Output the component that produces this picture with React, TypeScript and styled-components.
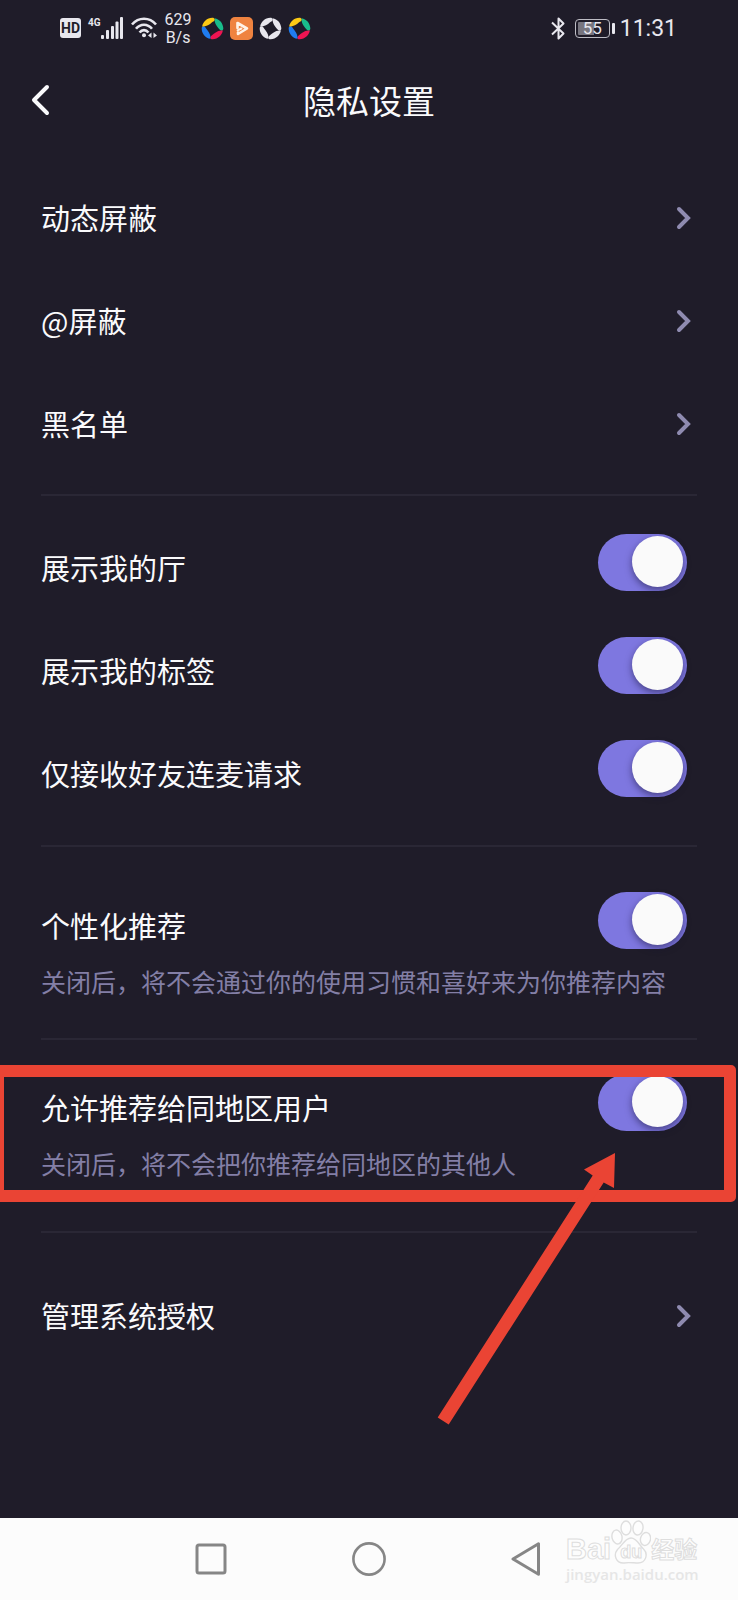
import React, { useId, useState } from "react";
import styled, { createGlobalStyle } from "styled-components";

const GlobalStyle = createGlobalStyle`
  * { box-sizing: border-box; }
  html, body { margin: 0; background: #1f1c29; }
  body { font-family: "Noto Sans CJK SC", "Noto Sans", sans-serif; }
  button { border: 0; padding: 0; background: none; color: inherit; font: inherit; cursor: pointer; }
`;

const Screen = styled.div`
  display: flex;
  flex-direction: column;
  min-height: 100vh;
  color: #fafafc;
  background: #1f1c29;
  overflow-x: hidden;
`;

const StatusBar = styled.div`
  display: flex;
  align-items: center;
  justify-content: space-between;
  height: 56px;
  padding: 0 61px 0 60px;
  color: #e8e7ee;
  font-family: Roboto, sans-serif;
`;

const StatusGroup = styled.div<{ $gap: number }>`
  display: flex;
  align-items: center;
  gap: ${(p) => p.$gap}px;
`;

const HdBadge = styled.span`
  width: 21px;
  height: 20px;
  border-radius: 3px;
  background: #e8e7ee;
  color: #1f1c29;
  font-size: 14px;
  font-weight: 700;
  line-height: 20px;
  text-align: center;
`;

const Signal = styled.span`
  display: flex;
  align-items: flex-start;
  height: 22px;
  font-size: 10px;
  font-weight: 700;
  line-height: 12px;
`;

const Speed = styled.span`
  padding-top: 1px;
  font-size: 16px;
  line-height: 18px;
  text-align: center;
`;

const AppIcons = styled.span`
  display: flex;
  gap: 6px;
  margin-left: 2px;
`;

const Battery = styled.span`
  display: flex;
  align-items: center;
  gap: 2px;
  margin-left: 5px;
  &::after {
    content: "";
    width: 3px;
    height: 11px;
    border-radius: 1px;
    background: #e8e7ee;
  }
`;

const BatteryBody = styled.span`
  width: 35px;
  height: 19px;
  border: 1px solid #bdbcc4;
  border-radius: 4px;
  background: linear-gradient(90deg, #77757f 55%, transparent 55%) content-box;
  padding: 2px;
  font-size: 17px;
  line-height: 13px;
  text-align: center;
`;

const Clock = styled.span`
  padding-top: 1px;
  font-size: 23px;
  line-height: 28px;
`;

const Header = styled.header`
  display: grid;
  grid-template-columns: 1fr auto 1fr;
  align-items: center;
  height: 88px;
  padding: 0 28px;
`;

const BackButton = styled.button`
  display: flex;
  justify-self: start;
`;

const Title = styled.h1`
  margin: 0;
  font-size: 33px;
  font-weight: 400;
  line-height: 48px;
`;

const Content = styled.main`
  flex: 1;
`;

const Section = styled.section<{ $top: number; $bottom: number }>`
  position: relative;
  padding: ${(p) => p.$top}px 41px ${(p) => p.$bottom}px;
`;

const Divider = styled.hr`
  height: 2px;
  margin: 0 41px;
  border: 0;
  background: #2a2735;
`;

const LinkRow = styled.a`
  display: flex;
  align-items: center;
  justify-content: space-between;
  height: 103px;
  padding-right: 5px;
  color: inherit;
  font-size: 29px;
  line-height: 42px;
  text-decoration: none;
`;

const LinkLabel = styled.span`
  padding-bottom: 2px;
`;

const SwitchRow = styled.div`
  display: flex;
  align-items: flex-start;
  justify-content: space-between;
  padding-right: 10px;
`;

const SwitchList = styled.div`
  display: grid;
  gap: 46px;
`;

const SwitchLabel = styled.label`
  padding-top: 12px;
  font-size: 29px;
  line-height: 42px;
`;

const Toggle = styled.input`
  appearance: none;
  flex: none;
  width: 89px;
  height: 57px;
  margin: 0;
  padding: 2px 4px;
  border-radius: 29px;
  background: #4a475a;
  cursor: pointer;
  &:checked { background: #7e77e0; }
  &::before {
    content: "";
    display: block;
    width: 51px;
    height: 51px;
    border-radius: 50%;
    background: #fafafa;
    box-shadow: 0 3px 7px rgba(20, 16, 50, 0.5);
  }
  &:checked::before { margin-left: auto; }
`;

const Hint = styled.p`
  margin: 14px 0 0;
  color: #837fa6;
  font-size: 25px;
  line-height: 36px;
`;

const HighlightBox = styled.div`
  position: absolute;
  z-index: 1;
  top: 25px;
  right: 2px;
  bottom: 29px;
  left: -8px;
  border: 12px solid #ea4434;
  border-radius: 5px;
  pointer-events: none;
`;

const HighlightArrow = styled.svg`
  position: absolute;
  z-index: 2;
  top: 112px;
  right: 121px;
  pointer-events: none;
`;

const NavBar = styled.nav`
  position: relative;
  display: flex;
  align-items: center;
  justify-content: center;
  gap: 110px;
  height: 82px;
  background: #fcfcfc;
`;

const NavButton = styled.button`
  display: flex;
  align-items: center;
  justify-content: center;
  width: 48px;
  height: 48px;
`;

const Watermark = styled.div`
  position: absolute;
  right: 39px;
  bottom: 16px;
  width: 133px;
  color: #fdfdfd;
  font-family: "Liberation Sans", "Noto Sans CJK SC", sans-serif;
  font-weight: 700;
  white-space: nowrap;
  -webkit-text-stroke: 1px #dedede;
  pointer-events: none;
`;

const WatermarkLogo = styled.div`
  display: flex;
  align-items: flex-end;
  height: 44px;
  font-size: 29px;
  line-height: 30px;
`;

const Paw = styled.span`
  display: grid;
  flex: none;
  place-items: end center;
  font-size: 18px;
  line-height: 24px;
  & > * { grid-area: 1 / 1; }
  & > span { z-index: 1; }
`;

const WatermarkCjk = styled.span`
  font-size: 23px;
  line-height: 28px;
`;

const WatermarkUrl = styled.div`
  color: #e6e6e6;
  font-family: "Open Sans", sans-serif;
  font-size: 15px;
  font-weight: 600;
  line-height: 20px;
  -webkit-text-stroke: 0;
`;

const Chevron = () => (
  <svg width="16" height="24" viewBox="0 0 16 24" fill="none" stroke="#8f8bb0" strokeWidth="4" strokeLinecap="round" aria-hidden="true">
    <path d="M3 3 L12 12 L3 21" />
  </svg>
);

const blade = "M14.200 1.200C19.200 2 23 6.200 23.300 11.800C23.300 14.800 20.600 15 19.200 12.800C17.600 10.400 13.400 6.600 14.200 1.200Z";

const Pinwheel = ({ colors }: { colors: string[] }) => (
  <svg width="23" height="23" viewBox="0 0 24 24" aria-hidden="true">
    {colors.map((color, i) => (
      <path key={i} d={blade} fill={color} transform={`rotate(${i * 90} 12 12)`} />
    ))}
  </svg>
);

const brand = ["#19bd8b", "#ee1452", "#1f7cf0", "#fbc915"];
const plain = ["#e8e7ee", "#e8e7ee", "#e8e7ee", "#e8e7ee"];

const PlayerIcon = () => (
  <svg width="23" height="23" viewBox="0 0 23 23" aria-hidden="true">
    <rect width="23" height="23" rx="5" fill="#ef8340" />
    <path d="M8 15.5V17L17 11.5L7.5 6V11" fill="none" stroke="#fff3e8" strokeWidth="2.6" strokeLinecap="round" strokeLinejoin="round" />
    <path d="M7.6 13.4L11.4 11.5" stroke="#fff3e8" strokeWidth="2" strokeLinecap="round" />
  </svg>
);

const SignalBars = () => (
  <svg width="23" height="22" viewBox="0 0 23 22" fill="currentColor" aria-hidden="true">
    <rect x="0" y="18" width="3" height="4" rx="1" />
    <rect x="5" y="13" width="3" height="9" rx="1" />
    <rect x="10" y="9" width="3" height="13" rx="1" />
    <rect x="14.5" y="4.5" width="3" height="17.5" rx="1" />
    <rect x="19" y="0" width="3" height="22" rx="1" />
  </svg>
);

const Wifi = () => (
  <svg width="27" height="22" viewBox="0 0 27 22" fill="none" stroke="currentColor" strokeWidth="2.6" aria-hidden="true">
    <path d="M1 7.5C7.6-.2 18.400-.2 25 7.500" />
    <path d="M5 11.800C9.400 6.400 16.600 6.400 21 11.800" />
    <path d="M8.600 15.500C11 12.300 15 12.300 17.400 15.500" />
    <circle cx="13" cy="18.200" r="2" fill="currentColor" stroke="none" />
    <path d="M17 18.500L20.500 15.500V21ZM26 18.500L22.500 15.500V21Z" fill="currentColor" stroke="none" />
  </svg>
);

const Bluetooth = () => (
  <svg width="14" height="23" viewBox="0 0 14 23" fill="none" stroke="currentColor" strokeWidth="2" strokeLinejoin="round" aria-hidden="true">
    <path d="M1 5.500L12.500 16.500L7.500 21.500V1.500L12.500 6.500L1 17.500" />
  </svg>
);

function Switch({ label, hint }: { label: string; hint?: string }) {
  const id = useId();
  const [on, setOn] = useState(true);
  return (
    <div>
      <SwitchRow>
        <SwitchLabel htmlFor={id}>{label}</SwitchLabel>
        <Toggle id={id} type="checkbox" role="switch" checked={on} onChange={(e) => setOn(e.target.checked)} />
      </SwitchRow>
      {hint && <Hint>{hint}</Hint>}
    </div>
  );
}

const NavLinkRow = ({ label }: { label: string }) => (
  <LinkRow href="#">
    <LinkLabel>{label}</LinkLabel>
    <Chevron />
  </LinkRow>
);

export default function App() {
  return (
    <>
      <GlobalStyle />
      <Screen>
        <StatusBar>
          <StatusGroup $gap={7}>
            <HdBadge>HD</HdBadge>
            <Signal>
              4G
              <SignalBars />
            </Signal>
            <Wifi />
            <Speed>
              629
              <br />
              B/s
            </Speed>
            <AppIcons>
              <Pinwheel colors={brand} />
              <PlayerIcon />
              <Pinwheel colors={plain} />
              <Pinwheel colors={brand} />
            </AppIcons>
          </StatusGroup>
          <StatusGroup $gap={5}>
            <Bluetooth />
            <Battery>
              <BatteryBody>55</BatteryBody>
            </Battery>
            <Clock>11:31</Clock>
          </StatusGroup>
        </StatusBar>

        <Header>
          <BackButton type="button" aria-label="返回">
            <svg width="24" height="34" viewBox="0 0 24 34" fill="none" stroke="#fafafc" strokeWidth="4" strokeLinecap="round" strokeLinejoin="round" aria-hidden="true">
              <path d="M19 4L6 17L19 30" />
            </svg>
          </BackButton>
          <Title>隐私设置</Title>
        </Header>

        <Content>
          <Section $top={22} $bottom={19}>
            <NavLinkRow label="动态屏蔽" />
            <NavLinkRow label="@屏蔽" />
            <NavLinkRow label="黑名单" />
          </Section>
          <Divider />
          <Section $top={38} $bottom={48}>
            <SwitchList>
              <Switch label="展示我的厅" />
              <Switch label="展示我的标签" />
              <Switch label="仅接收好友连麦请求" />
            </SwitchList>
          </Section>
          <Divider />
          <Section $top={45} $bottom={39}>
            <Switch label="个性化推荐" hint="关闭后，将不会通过你的使用习惯和喜好来为你推荐内容" />
          </Section>
          <Divider />
          <Section $top={34} $bottom={50}>
            <Switch label="允许推荐给同地区用户" hint="关闭后，将不会把你推荐给同地区的其他人" />
            <HighlightBox />
            <HighlightArrow width="181" height="274" viewBox="0 0 181 274" fill="#ea4434" aria-hidden="true">
              <path d="M179 1L178 36L167.700 30.500L12.700 272.500L1.700 265.500L156.700 23.500L148 17.500Z" />
            </HighlightArrow>
          </Section>
          <Divider />
          <Section $top={31} $bottom={40}>
            <NavLinkRow label="管理系统授权" />
          </Section>
        </Content>

        <NavBar>
          <NavButton type="button" aria-label="最近任务">
            <svg width="32" height="32" viewBox="0 0 32 32" fill="none" stroke="#868686" strokeWidth="3" aria-hidden="true">
              <rect x="2" y="2" width="28" height="28" rx="2" />
            </svg>
          </NavButton>
          <NavButton type="button" aria-label="主页">
            <svg width="34" height="34" viewBox="0 0 34 34" fill="none" stroke="#868686" strokeWidth="2.600" aria-hidden="true">
              <circle cx="17" cy="17" r="15.600" />
            </svg>
          </NavButton>
          <NavButton type="button" aria-label="后退">
            <svg width="32" height="36" viewBox="0 0 32 36" fill="none" stroke="#868686" strokeWidth="3" strokeLinejoin="round" aria-hidden="true">
              <path d="M2 18L27.500 2.800V33.200Z" />
            </svg>
          </NavButton>
          <Watermark>
            <WatermarkLogo>
              Bai
              <Paw>
                <svg width="40" height="44" viewBox="0 0 40 44" fill="#fdfdfd" stroke="#dedede" strokeWidth="1.400" aria-hidden="true">
                  <ellipse cx="6" cy="17" rx="5" ry="7" transform="rotate(-12 6 17)" />
                  <ellipse cx="15" cy="8" rx="5" ry="7" />
                  <ellipse cx="27" cy="8" rx="5" ry="7" transform="rotate(8 27 8)" />
                  <ellipse cx="34.500" cy="19" rx="5" ry="6.500" transform="rotate(14 34.500 19)" />
                  <path d="M20 18C26 18 28 25 32.500 29C37.500 34 35 43 27 43C23 43 17 42 13 43C5 43.500 2 35 6.500 29.500C11 26 14 18 20 18Z" />
                </svg>
                <span>du</span>
              </Paw>
              <WatermarkCjk>经验</WatermarkCjk>
            </WatermarkLogo>
            <WatermarkUrl>jingyan.baidu.com</WatermarkUrl>
          </Watermark>
        </NavBar>
      </Screen>
    </>
  );
}
